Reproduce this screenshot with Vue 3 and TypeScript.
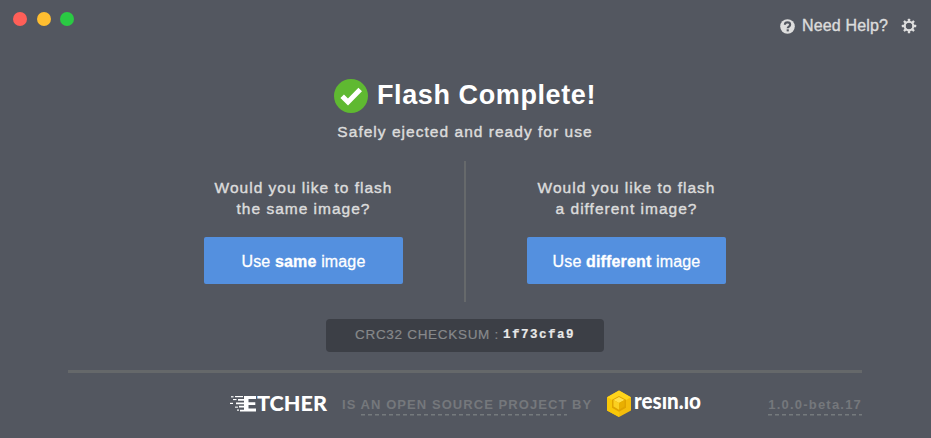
<script setup lang="ts">
interface Choice {
  lines: [string, string]
  target: string
}

const choices: Choice[] = [
  { lines: ['Would you like to flash', 'the same image?'], target: 'same' },
  { lines: ['Would you like to flash', 'a different image?'], target: 'different' },
]
const checksum = '1f73cfa9'
const version = '1.0.0-beta.17'
</script>

<template>
  <div class="window">
    <header class="titlebar">
      <div class="lights">
        <i class="light close"></i>
        <i class="light minimise"></i>
        <i class="light zoom"></i>
      </div>
      <nav class="tools">
        <svg class="help-icon" viewBox="0 0 16 16">
          <circle cx="8" cy="8" r="7.8" fill="#dedede" />
          <path d="M5.2 6.2C5.3 2.8 10.8 2.9 10.8 6.1C10.8 8 8.2 8 8.2 9.8" fill="none" stroke="#535760" stroke-width="2.3" />
          <rect x="7.1" y="11" width="2.3" height="2.2" fill="#535760" />
        </svg>
        <span class="help">Need Help?</span>
        <svg class="gear" viewBox="0 0 16 16">
          <g fill="#dedede">
            <rect v-for="n in 8" :key="n" x="6.8" y="0.8" width="2.4" height="3.6" rx="0.5" :transform="`rotate(${n * 45} 8 8)`" />
          </g>
          <circle cx="8" cy="8" r="4.3" fill="none" stroke="#dedede" stroke-width="2.1" />
        </svg>
      </nav>
    </header>

    <main class="content">
      <h1 class="title">
        <svg class="tick" viewBox="0 0 34 34">
          <circle cx="17" cy="17" r="17" fill="#5fb931" />
          <path d="M8.2 17.2L14 23L26.2 10.6" fill="none" stroke="#fff" stroke-width="5" />
        </svg>
        <span class="title-text">Flash Complete!</span>
      </h1>
      <p class="subtitle">Safely ejected and ready for use</p>

      <div class="choices">
        <section v-for="choice in choices" :key="choice.target" class="choice">
          <p class="question">{{ choice.lines[0] }}<br />{{ choice.lines[1] }}</p>
          <button class="button">Use <b>{{ choice.target }}</b> image</button>
        </section>
      </div>

      <div class="checksum">
        <span>CRC32 CHECKSUM :</span><code>{{ checksum }}</code>
      </div>
    </main>

    <footer class="footer">
      <svg class="etcher" viewBox="0 0 102 28">
        <g fill="#fff">
          <path d="M14 6H26V9H18.5V12.3H25.3V15.1H18.5V18.6H26V21.6H10V19.8H14V17.5H9V15.7H14V14.2H6V12.5H14V10.7H8V9H14Z" />
          <rect x="5" y="6" width="8" height="1.2" />
          <rect x="1" y="6.2" width="2.5" height="1.2" />
          <rect x="3" y="9" width="3.5" height="1.1" />
          <rect x="0" y="12.8" width="3" height="1.2" />
          <rect x="5" y="16.6" width="3" height="1.1" />
          <rect x="7" y="19.5" width="2" height="1.2" />
        </g>
        <text x="27" y="21.4" textLength="70" lengthAdjust="spacingAndGlyphs" class="etcher-word">TCHER</text>
      </svg>
      <span class="credit">IS <span class="dashed">AN OPEN SOURCE PROJECT</span> BY</span>
      <svg class="resin" viewBox="0 -3 98 34">
        <path d="M12 0.5L24 7.2V20.5L12 27L0 20.5V7.2Z" fill="#f4bd0b" />
        <path d="M12 0.5L24 7.2L12 14L0 7.2Z" fill="#ffd51c" />
        <path d="M0 7.2L12 14V27L0 20.5Z" fill="#f8c708" />
        <path d="M12 6L19 9.8V17.7L12 21.7L5 17.7V9.8Z" fill="#dfa300" />
        <path d="M12 7L17.5 10L12 13L6.5 10Z" fill="#ffe04b" />
        <path d="M6.5 10L12 13V19.7L6.5 16.6Z" fill="#fbd020" />
        <path d="M17.5 10L12 13V19.7L17.5 16.6Z" fill="#e9af00" />
        <text x="27" y="19.3" textLength="67" lengthAdjust="spacingAndGlyphs" class="resin-word">resın.ıo</text>
      </svg>
      <span class="version dashed">{{ version }}</span>
    </footer>
  </div>
</template>

<style>
body {
  margin: 0;
  background: #535760;
}
</style>

<style scoped>
.window {
  box-sizing: border-box;
  width: 931px;
  height: 438px;
  overflow: hidden;
  background: #535760;
  color: #dcdcdc;
  font-family: "Liberation Sans", Arial, sans-serif;
}
.titlebar {
  display: flex;
  justify-content: space-between;
  height: 78px;
  padding: 0 14px 0 13px;
}
.lights {
  display: flex;
  gap: 9.5px;
  padding-top: 12px;
}
.light {
  width: 14px;
  height: 14px;
  border-radius: 50%;
}
.close { background: #ff5f58; }
.minimise { background: #ffbe30; }
.zoom { background: #2aca43; }
.tools {
  display: flex;
  align-items: center;
  height: 52px;
}
.help-icon {
  width: 15px;
  height: 15px;
  margin-right: 7px;
}
.help {
  width: 87px;
  font-size: 16px;
  letter-spacing: 0.15px;
  white-space: nowrap;
  -webkit-text-stroke: 0.4px;
}
.gear {
  width: 16px;
  height: 16px;
  margin-left: 12px;
}
.content {
  display: flex;
  flex-direction: column;
  align-items: center;
  padding-right: 1px;
}
.title {
  display: flex;
  align-items: center;
  gap: 9px;
  height: 35px;
  margin: 0;
  color: #fff;
  font-size: 27px;
  font-weight: 700;
  letter-spacing: 0.6px;
  white-space: nowrap;
}
.tick {
  width: 34px;
  height: 34px;
}
.subtitle {
  margin: 9px 0 0;
  font-size: 15.5px;
  line-height: 20px;
  letter-spacing: 1.03px;
  -webkit-text-stroke: 0.4px;
}
.choices {
  display: flex;
  height: 141px;
  margin-top: 19px;
}
.choice {
  display: flex;
  flex-direction: column;
  align-items: center;
  width: 199px;
}
.choice:first-child {
  padding-right: 61px;
}
.choice + .choice {
  padding-left: 61px;
  border-left: 2px solid #66696b;
}
.question {
  margin: 16px 0 18px;
  font-size: 15.5px;
  line-height: 21px;
  letter-spacing: 1px;
  text-align: center;
  white-space: nowrap;
  -webkit-text-stroke: 0.4px;
}
.button {
  width: 199px;
  height: 47px;
  padding: 2px 0 0;
  border: 0;
  border-radius: 2px;
  background: #5490df;
  color: #fff;
  font: 16px "Liberation Sans", Arial, sans-serif;
  letter-spacing: 0.15px;
  -webkit-text-stroke: 0.3px;
}
.checksum {
  display: flex;
  align-items: center;
  justify-content: center;
  box-sizing: border-box;
  width: 278px;
  height: 33px;
  margin-top: 17px;
  padding-bottom: 2px;
  border-radius: 4px;
  background: #3c3f46;
  color: #87898b;
  font-size: 13.5px;
  letter-spacing: 0.7px;
  -webkit-text-stroke: 0.2px;
}
.checksum code {
  margin-left: 4px;
  color: #e8e8e8;
  font: 700 12.5px "Liberation Mono", monospace;
  letter-spacing: 1.5px;
}
.footer {
  display: flex;
  align-items: center;
  height: 62px;
  margin: 18px 69px 0 68px;
  padding-left: 162px;
  border-top: 3px solid #65686a;
  color: #75787c;
  font-size: 13px;
  font-weight: 700;
  white-space: nowrap;
}
.etcher {
  width: 102px;
  height: 28px;
}
.etcher-word {
  fill: #fff;
  font: 900 21px Lato, sans-serif;
}
.credit {
  margin-left: 10px;
  letter-spacing: 1.06px;
}
.dashed {
  padding-bottom: 4px;
  background: repeating-linear-gradient(90deg, #757a7d 0 4px, transparent 4px 7px) left bottom / 100% 1.5px no-repeat;
}
.resin {
  width: 98px;
  height: 34px;
  margin-left: 15px;
}
.resin-word {
  fill: #fff;
  font: 900 22px Lato, sans-serif;
}
.version {
  margin-left: auto;
  padding-top: 4px;
  letter-spacing: 1.2px;
}
</style>
